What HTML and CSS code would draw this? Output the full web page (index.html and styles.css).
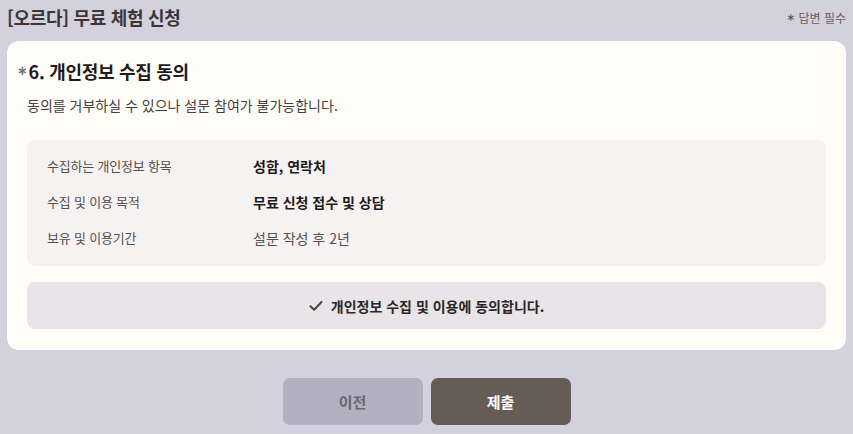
FILE: index.html
```html
<!DOCTYPE html>
<html lang="ko">
<head>
<meta charset="utf-8">
<link rel="stylesheet" href="styles.css">
</head>
<body>
<header class="top">
  <h1 class="form-title">[오르다] 무료 체험 신청</h1>
  <span class="required-note"><span class="star">∗</span> 답변 필수</span>
</header>
<section class="card">
  <h2 class="q-title"><span class="q-star">∗</span>6. 개인정보 수집 동의</h2>
  <p class="q-desc">동의를 거부하실 수 있으나 설문 참여가 불가능합니다.</p>
  <div class="info">
    <div class="row"><span class="label">수집하는 개인정보 항목</span><span class="value strong">성함, 연락처</span></div>
    <div class="row"><span class="label">수집 및 이용 목적</span><span class="value strong">무료 신청 접수 및 상담</span></div>
    <div class="row"><span class="label">보유 및 이용기간</span><span class="value">설문 작성 후 2년</span></div>
  </div>
  <button class="agree" type="button">
    <svg class="check" width="14" height="12" viewBox="0 0 14 12"><path d="M1.5 6.2 L5.2 9.8 L12.5 2" fill="none" stroke="#4a4444" stroke-width="2" stroke-linecap="round" stroke-linejoin="round"/></svg>
    <span>개인정보 수집 및 이용에 동의합니다.</span>
  </button>
</section>
<nav class="actions">
  <button class="btn prev" type="button">이전</button>
  <button class="btn submit" type="button">제출</button>
</nav>
</body>
</html>
```

FILE: styles.css
```css
* { box-sizing: border-box; }
html, body { margin: 0; padding: 0; }
body {
  background: #d4d1de;
  font-family: "Noto Sans CJK KR", "Noto Sans", sans-serif;
  color: #2b2626;
  width: 853px;
  height: 434px;
  overflow: hidden;
}
.top {
  display: flex;
  justify-content: space-between;
  align-items: center;
  height: 33px;
  padding: 0 7px;
}
.form-title {
  margin: 0;
  font-size: 18px;
  font-weight: 700;
  color: #3b3535;
  letter-spacing: -0.3px;
  line-height: 24px;
}
.required-note {
  font-size: 12px;
  color: #666166;
  line-height: 16px;
  margin-top: 2px;
  display: flex;
  align-items: center;
  gap: 3px;
}
.required-note .star {
  font-family: "DejaVu Sans", sans-serif;
  font-size: 11px;
  color: #555;
  font-weight: 400;
}
.card {
  margin: 8px 7px 0 7px;
  background: #fffdf8;
  border-radius: 12px;
  padding: 17px 20px 21px 20px;
  display: flex;
  flex-direction: column;
}
.q-title {
  margin: 0 0 0 -10px;
  font-size: 18px;
  font-weight: 700;
  line-height: 24px;
  color: #1f1b1b;
  letter-spacing: -0.3px;
  display: flex;
  align-items: center;
}
.q-star {
  font-family: "DejaVu Sans", sans-serif;
  font-size: 13px;
  color: #777;
  font-weight: 700;
  margin-right: 1px;
  margin-top: 1px;
}
.q-desc {
  margin: 12px 0 0 0;
  font-size: 14px;
  line-height: 20px;
  color: #454040;
  letter-spacing: 0;
}
.info {
  margin-top: 25px;
  background: #f6f2f2;
  border-radius: 8px;
  padding: 16px 20px 18px 20px;
  display: flex;
  flex-direction: column;
  gap: 16px;
}
.row {
  display: flex;
  align-items: center;
  height: 20px;
  line-height: 20px;
}
.label {
  width: 206px;
  font-size: 13px;
  color: #555050;
  letter-spacing: -0.2px;
}
.value {
  font-size: 14px;
  color: #555050;
  letter-spacing: 0;
}
.value.strong { font-weight: 700; color: #1f1b1b; }
.agree {
  margin-top: 16px;
  height: 47px;
  border: 0;
  border-radius: 8px;
  background: #e8e4e8;
  display: flex;
  align-items: center;
  justify-content: center;
  gap: 8px;
  font-family: inherit;
  font-size: 14px;
  font-weight: 700;
  color: #2b2626;
  letter-spacing: 0;
  padding: 0;
}
.check { display: block; }
.actions {
  display: flex;
  justify-content: center;
  gap: 8px;
  margin-top: 28px;
}
.btn {
  width: 140px;
  height: 47px;
  border: 0;
  border-radius: 7px;
  font-family: inherit;
  font-size: 15px;
  font-weight: 700;
  padding: 0;
}
.prev { background: #b3b0c1; color: #6b6670; }
.submit { background: #665c56; color: #ffffff; }
```
